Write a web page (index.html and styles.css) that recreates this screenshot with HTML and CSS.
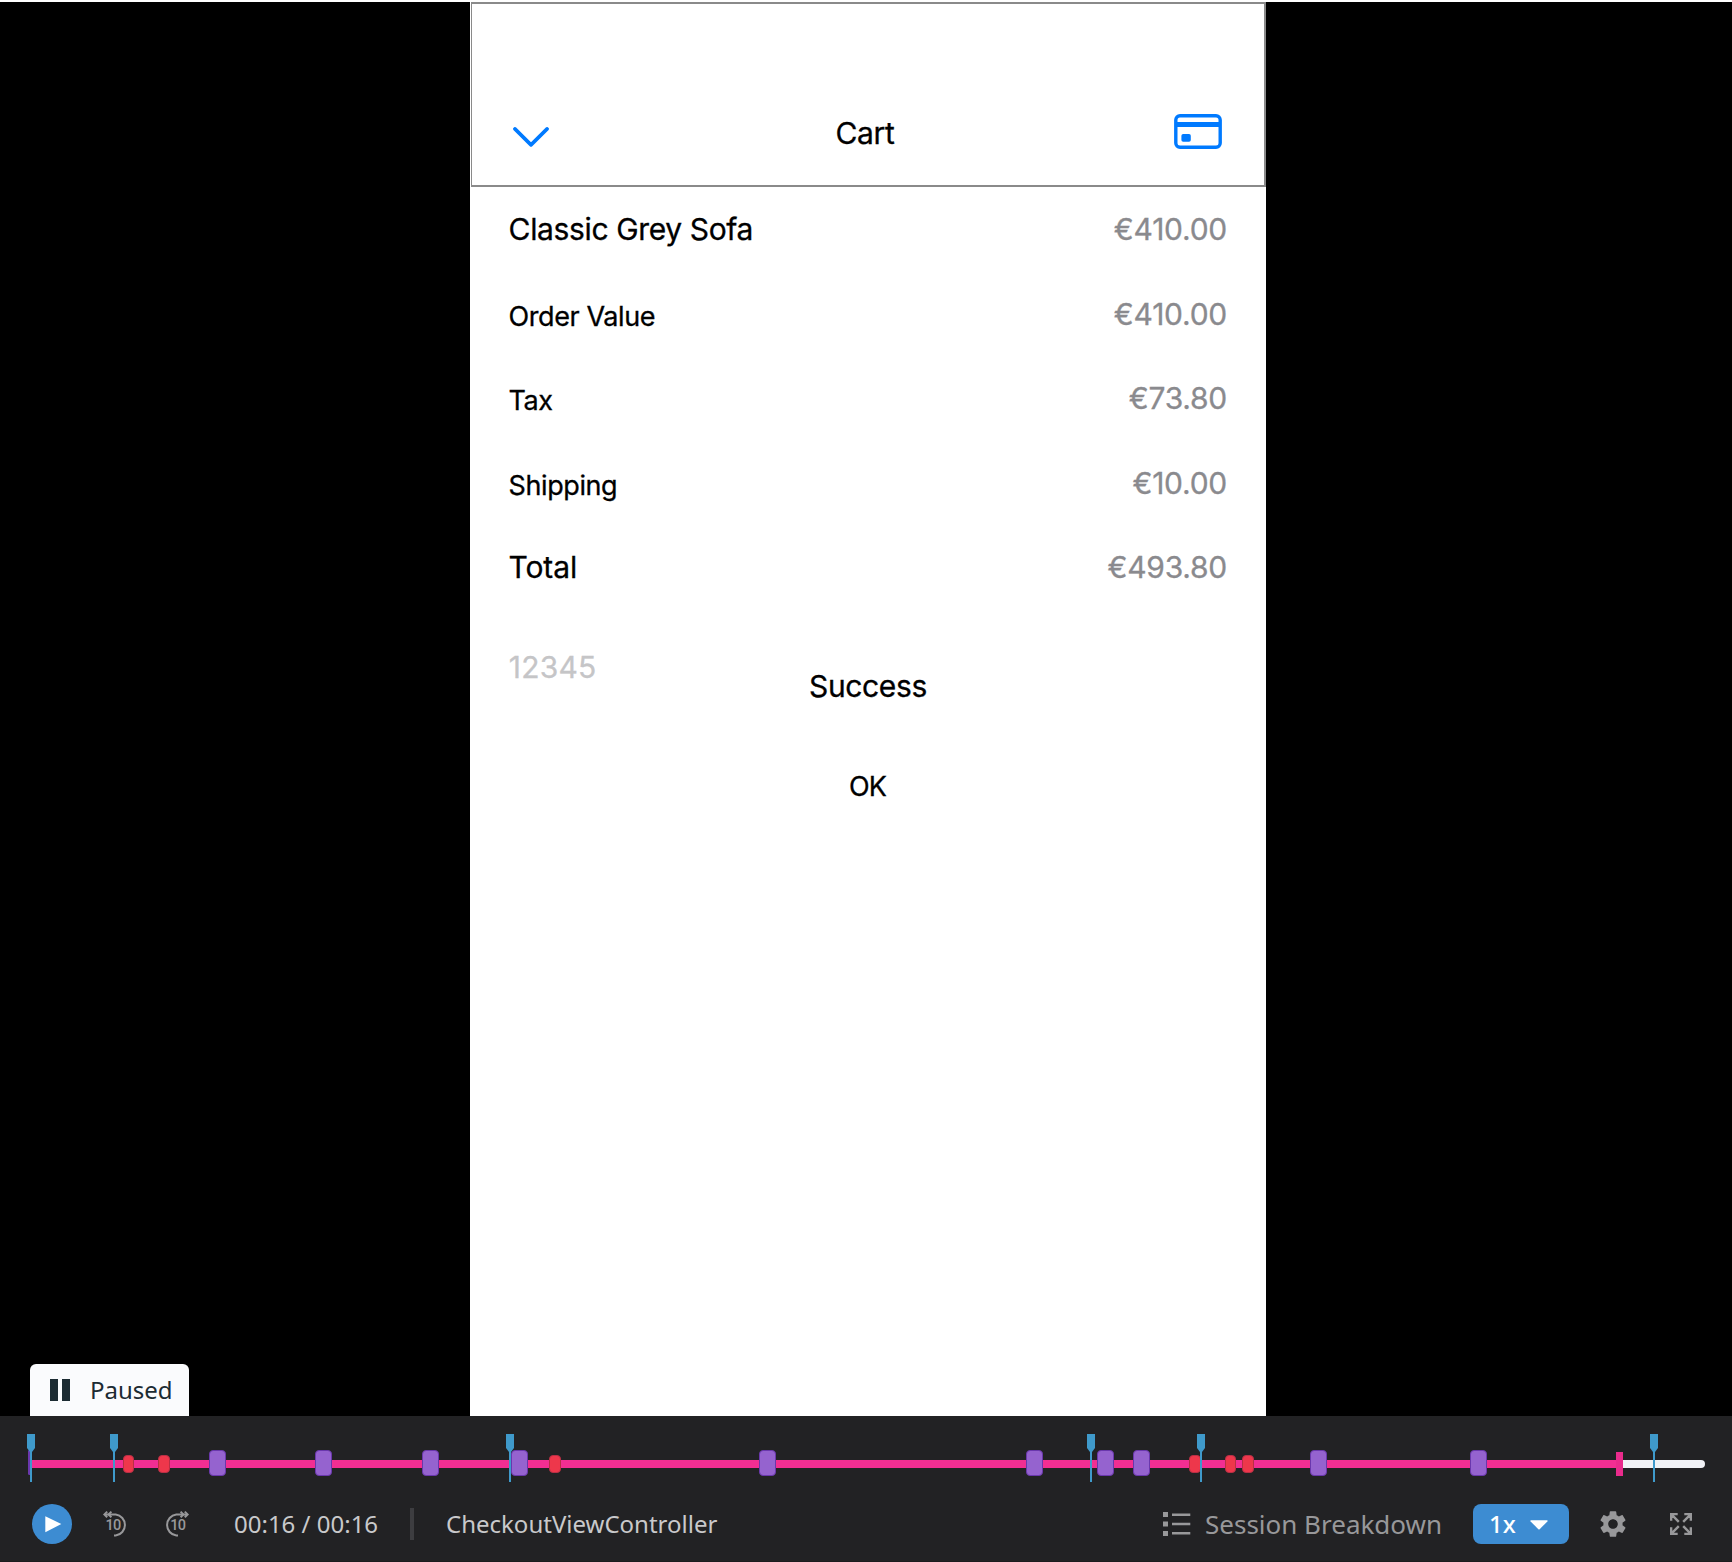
FILE: index.html
```html
<!DOCTYPE html>
<html lang="en">
<head>
<meta charset="utf-8">
<title>Session Replay</title>
<link rel="stylesheet" href="styles.css">
</head>
<body>
<svg width="0" height="0" class="defs">
  <symbol id="pin" viewBox="0 0 8 48"><path d="M0 0H8V14L5 18V48H3V18L0 14Z" fill="#3f9acb"/></symbol>
</svg>
<main class="stage">
  <div class="status">
    <svg class="status-icon" width="20" height="22" viewBox="0 0 20 22"><path d="M0 0H8V22H0ZM12 0H20V22H12Z" fill="#1c2b33"/></svg>
    <span>Paused</span>
  </div>
  <section class="phone">
    <header class="nav">
      <svg class="chevron" width="36" height="20" viewBox="0 0 36 20"><path d="M1.9 1.9L18 17.9L34.1 1.9" fill="none" stroke="#007aff" stroke-width="3.6" stroke-linecap="round" stroke-linejoin="round"/></svg>
      <h1 class="title">Cart</h1>
      <svg class="card" width="48" height="35" viewBox="0 0 48 35"><rect x="1.8" y="1.8" width="44.4" height="31.4" rx="4.2" fill="none" stroke="#007aff" stroke-width="3.4"/><path d="M2 8H46V13H2Z" fill="#007aff"/><rect x="7.4" y="20" width="9.4" height="7.8" rx="1.8" fill="#007aff"/></svg>
    </header>
    <div class="rows">
      <div class="row"><span class="label">Classic Grey Sofa</span><span class="value">€410.00</span></div>
      <div class="row"><span class="label small">Order Value</span><span class="value">€410.00</span></div>
      <div class="row"><span class="label small">Tax</span><span class="value">€73.80</span></div>
      <div class="row"><span class="label small">Shipping</span><span class="value">€10.00</span></div>
      <div class="row"><span class="label total">Total</span><span class="value">€493.80</span></div>
    </div>
    <div class="zip">12345</div>
    <div class="success">Success</div>
    <div class="ok">OK</div>
  </section>
</main>
<footer class="player">
  <div class="timeline">
    <div class="progress"></div>
    <i class="event start" style="left:-2px"></i>
    <i class="event" style="left:179px"></i>
    <i class="event" style="left:285.2px"></i>
    <i class="event" style="left:392.2px"></i>
    <i class="event" style="left:481px"></i>
    <i class="event" style="left:729.4px"></i>
    <i class="event" style="left:996.2px"></i>
    <i class="event" style="left:1067.2px"></i>
    <i class="event" style="left:1103px"></i>
    <i class="event" style="left:1280.4px"></i>
    <i class="event" style="left:1440.4px"></i>
    <i class="error" style="left:92.7px"></i>
    <i class="error" style="left:128.2px"></i>
    <i class="error" style="left:519.3px"></i>
    <i class="error" style="left:1159px"></i>
    <i class="error" style="left:1194.7px"></i>
    <i class="error" style="left:1212.2px"></i>
    <i class="cursor" style="left:1586.3px"></i>
    <svg class="pin" style="left:-3px"><use href="#pin"/></svg>
    <svg class="pin" style="left:79.6px"><use href="#pin"/></svg>
    <svg class="pin" style="left:476.1px"><use href="#pin"/></svg>
    <svg class="pin" style="left:1056.6px"><use href="#pin"/></svg>
    <svg class="pin" style="left:1166.7px"><use href="#pin"/></svg>
    <svg class="pin" style="left:1620.3px"><use href="#pin"/></svg>
  </div>
  <div class="controls">
    <button class="play"><svg width="40" height="40" viewBox="0 0 40 40"><path d="M13.3 12.2L29.3 20L13.3 28.2Z" fill="#fff"/></svg></button>
    <svg class="skip back" width="28" height="28" viewBox="0 0 28 28"><g fill="none" stroke="#98989a" stroke-width="2"><path d="M5 4.4H15.7A10.7 10.7 0 0 1 15.7 25.6H14"/><path d="M7.2 1.6L4.4 4.4L7.2 7.2M11.4 1.6L8.6 4.4L11.4 7.2"/></g><text x="13" y="19.8" text-anchor="middle">10</text></svg>
    <svg class="skip forward" width="28" height="28" viewBox="0 0 28 28"><g fill="none" stroke="#98989a" stroke-width="2"><path d="M23 4.4H12.3A10.7 10.7 0 0 0 12.3 25.6H14"/><path d="M20.8 1.6L23.6 4.4L20.8 7.2M16.6 1.6L19.4 4.4L16.6 7.2"/></g><text x="13.8" y="19.8" text-anchor="middle">10</text></svg>
    <span class="time">00:16 / 00:16</span>
    <i class="divider"></i>
    <span class="screen">CheckoutViewController</span>
    <svg class="list" width="28" height="24" viewBox="0 0 28 24"><path d="M0 0H5V5H0ZM0 9.5H5V14.5H0ZM0 19H5V24H0ZM9 1.5H27.3V3.9H9ZM9 10.8H27.3V13.2H9ZM9 20.1H27.3V22.5H9Z" fill="#98989a"/></svg>
    <span class="breakdown">Session Breakdown</span>
    <button class="speed"><span>1x</span><svg width="18" height="10" viewBox="0 0 18 10"><path d="M1 .3H17Q18.2.3 17.4 1.4L9.6 9.3Q9 9.9 8.4 9.3L.6 1.4Q-.2.3 1 .3Z" fill="#fff"/></svg></button>
    <svg class="gear" width="32" height="32" viewBox="0 0 24 24"><path fill="#98989a" d="M19.14 12.94c.04-.3.06-.61.06-.94 0-.32-.02-.64-.07-.94l2.03-1.58c.18-.14.23-.41.12-.61l-1.92-3.32c-.12-.22-.37-.29-.59-.22l-2.39.96c-.5-.38-1.03-.7-1.62-.94l-.36-2.54c-.04-.24-.24-.41-.48-.41h-3.84c-.24 0-.43.17-.47.41l-.36 2.54c-.59.24-1.13.57-1.62.94l-2.39-.96c-.22-.08-.47 0-.59.22L2.74 8.87c-.12.21-.08.47.12.61l2.03 1.58c-.05.3-.09.63-.09.94s.02.64.07.94l-2.03 1.58c-.18.14-.23.41-.12.61l1.92 3.32c.12.22.37.29.59.22l2.39-.96c.5.38 1.03.7 1.62.94l.36 2.54c.05.24.24.41.48.41h3.84c.24 0 .44-.17.47-.41l.36-2.54c.59-.24 1.13-.56 1.62-.94l2.39.96c.22.08.47 0 .59-.22l1.92-3.32c.12-.22.07-.47-.12-.61l-2.01-1.58zM12 15.6c-1.98 0-3.6-1.62-3.6-3.6s1.62-3.6 3.6-3.6 3.6 1.62 3.6 3.6-1.62 3.6-3.6 3.6z"/></svg>
    <svg class="expand" width="22" height="22" viewBox="0 0 22 22"><path fill="none" stroke="#98989a" stroke-width="2.4" d="M1.15 7.7V1.15H7.7M1.4 1.4L8.8 8.8M14.3 1.15H20.85V7.7M20.6 1.4L13.2 8.8M1.15 14.3V20.85H7.7M1.4 20.6L8.8 13.2M14.3 20.85H20.85V14.3M20.6 20.6L13.2 13.2"/></svg>
  </div>
</footer>
</body>
</html>
```
FILE: styles.css
```css
* { box-sizing: border-box; }
body {
  margin: 0;
  width: 1732px;
  height: 1562px;
  overflow: hidden;
  background: #fff;
  font-family: "Noto Sans", sans-serif;
  display: flex;
  flex-direction: column;
}
svg { display: block; flex: none; }
.defs { position: absolute; }
button { border: 0; padding: 0; font: inherit; flex: none; }

.stage {
  position: relative;
  margin-top: 2px;
  height: 1414px;
  background: #000;
  padding-left: 470px;
}
.status {
  position: absolute;
  left: 30px;
  bottom: 0;
  width: 159px;
  height: 52px;
  padding-left: 20px;
  display: flex;
  align-items: center;
  gap: 20px;
  border-radius: 6px 6px 0 0;
  background: #fafbfd;
  color: #1c2b33;
  font-size: 24px;
  line-height: 32px;
}

.phone {
  width: 796px;
  height: 1414px;
  background: #fff;
  color: #000;
  font-family: Inter, sans-serif;
  font-size: 30px;
  line-height: 36px;
  letter-spacing: -0.36px;
  -webkit-text-stroke: 0.3px currentColor;
}
.nav {
  height: 185px;
  margin: 0 0 0 1px;
  border: 2px solid #8a8a8a;
  border-left-width: 1px;
  padding: 78px 42px 1px 41px;
  display: grid;
  grid-template-columns: 1fr auto 1fr;
  align-items: center;
}
.chevron { margin-top: 7px; }
.title { margin: 0 5px 0 0; font: inherit; }
.card { justify-self: end; margin-bottom: 3px; }
.rows { padding: 0 39px 0 38.6px; }
.row {
  height: 84.5px;
  display: flex;
  justify-content: space-between;
  align-items: center;
}
.label.small { font-size: 27px; letter-spacing: -0.42px; padding-top: 6.4px; }
.label.total { letter-spacing: -0.12px; }
.value { color: #8a8a8e; letter-spacing: -0.25px; }
.zip { margin: 39px 0 0 38.8px; color: #c5c5c7; letter-spacing: 0.2px; }
.success { margin-top: -17px; text-align: center; }
.ok { margin: 65px 1px 0 0; text-align: center; font-size: 27px; letter-spacing: -1px; }

.player {
  height: 146px;
  padding-top: 1px;
  background: #222224;
  border-bottom: 1px solid #1c1c1e;
}
.timeline {
  position: relative;
  margin: 43px 0 0 30px;
  width: 1675px;
  height: 8px;
  border-radius: 0 4px 4px 0;
  background: #f1f2f6;
}
.progress { width: 1590px; height: 8px; background: #f22e92; }
.event, .error, .cursor, .pin { position: absolute; }
.event {
  top: -10px;
  width: 17px;
  height: 26px;
  border: 1px solid #6a37ad;
  border-radius: 4px;
  background: #9563cf;
}
.event.start { width: 3px; height: 25px; border-radius: 1px; background: #6a37ad; }
.error {
  top: -5px;
  width: 11.5px;
  height: 18px;
  border: 1px solid #b92f45;
  border-radius: 4px;
  background: #ee374b;
}
.cursor { top: -8px; width: 6.3px; height: 24px; background: #ea2b8c; }
.pin { top: -26px; width: 8px; height: 48px; }

.controls {
  margin-top: 36px;
  height: 40px;
  padding-left: 32px;
  display: flex;
  align-items: center;
  color: #c9c9cb;
  font-size: 24px;
  line-height: 32px;
  white-space: nowrap;
}
.play { width: 40px; height: 40px; border-radius: 50%; background: #3d8cd2; }
.skip text { font: 500 14.5px Roboto, sans-serif; letter-spacing: -0.8px; fill: #98989a; }
.skip.back { margin-left: 28px; }
.skip.forward { margin-left: 36px; }
.time { width: 144px; margin-left: 42px; }
.divider { width: 4px; height: 32px; margin-left: 32px; background: #3d3d40; }
.screen { width: 272px; margin-left: 32px; }
.list { margin-left: 445px; }
.breakdown { width: 238px; margin-left: 14px; color: #98989a; font-size: 26px; }
.speed {
  width: 96px;
  height: 40px;
  margin-left: 30px;
  padding-left: 16px;
  display: flex;
  align-items: center;
  gap: 14px;
  border-radius: 8px;
  background: #3d8cd2;
  color: #fff;
  font-weight: 500;
}
.speed svg { margin-top: 1px; }
.gear { margin-left: 28px; }
.expand { margin-left: 41px; }
```
